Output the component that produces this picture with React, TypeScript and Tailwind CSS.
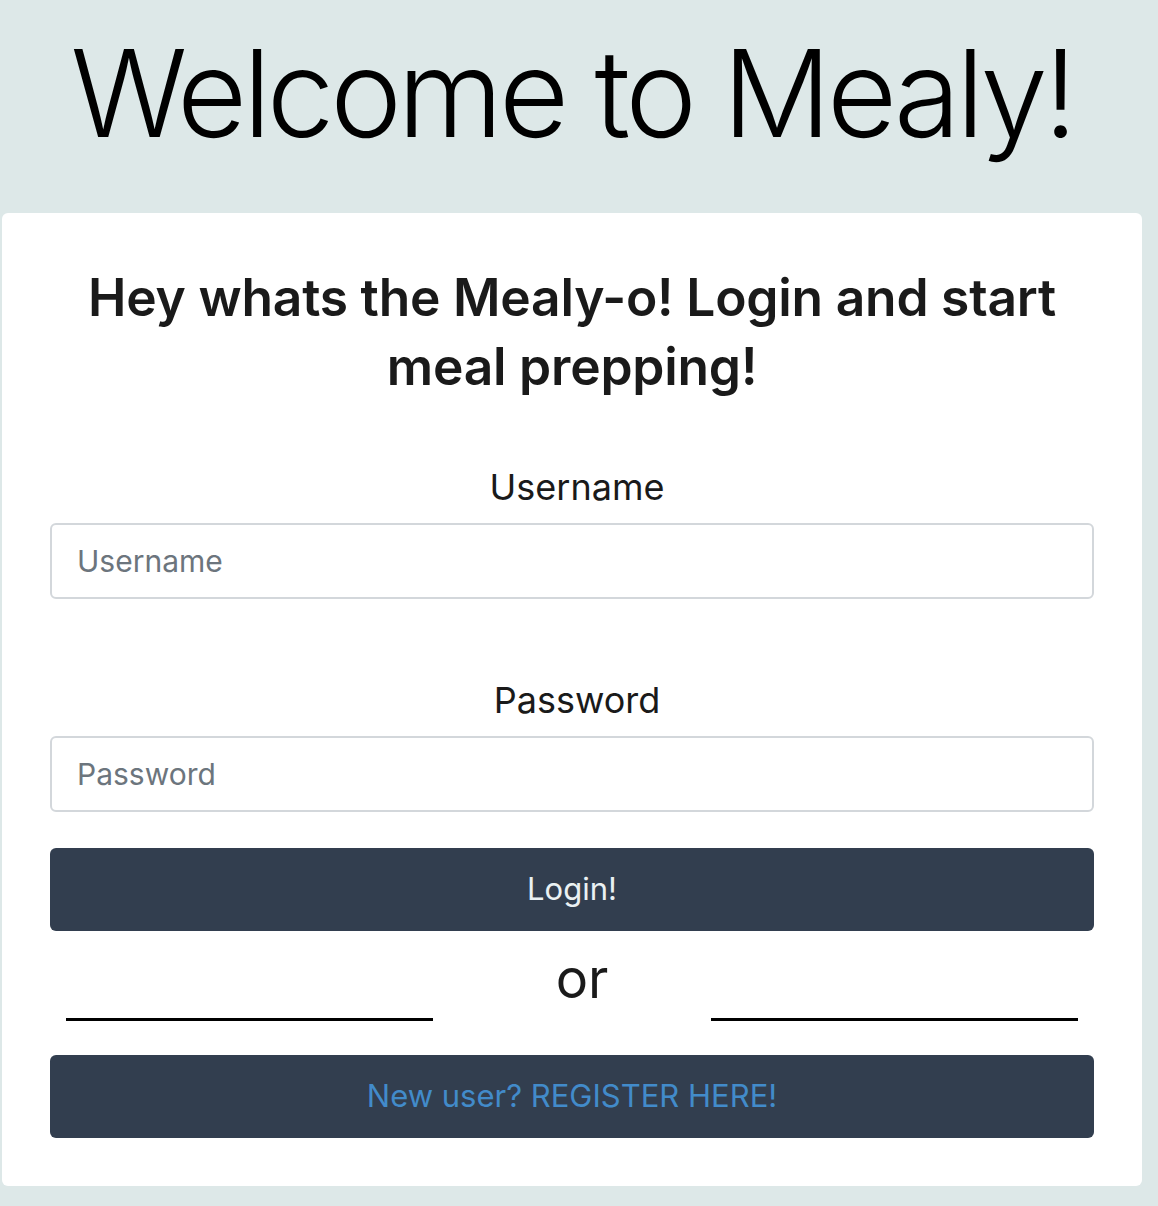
export default function App() {
  return (
    <div className="min-h-[1206px] w-full bg-[#dde8e8] font-['Inter',sans-serif]">
      <div className="w-[1144px]">
        <h1 className="pt-[18px] pb-[45px] text-center text-[121px] font-light leading-[150px] tracking-[-4.3px] text-black">
          Welcome to Mealy!
        </h1>

        <div className="mx-[2px] rounded-md bg-white px-[48px] pt-[50px] pb-[48px]">
          <h2 className="mx-auto max-w-[1000px] text-center text-[51.5px] font-[560] leading-[69px] tracking-[-0.2px] text-[#1a1a1a]">
            Hey whats the Mealy-o! Login and start meal prepping!
          </h2>

          <form className="mt-[66px] flex flex-col" onSubmit={(e) => e.preventDefault()}>
            <label htmlFor="username" className="pl-[10px] text-center text-[36px] leading-[40px] text-[#1a1a1a]">
              Username
            </label>
            <input
              id="username"
              type="text"
              placeholder="Username"
              className="mt-[16px] h-[76px] w-full rounded-md border-2 border-[#d3d7db] px-[25px] text-[30px] text-[#212529] outline-none placeholder:text-[#6c757d]"
            />

            <label htmlFor="password" className="mt-[81px] pl-[10px] text-center text-[36px] leading-[40px] text-[#1a1a1a]">
              Password
            </label>
            <input
              id="password"
              type="password"
              placeholder="Password"
              className="mt-[16px] h-[76px] w-full rounded-md border-2 border-[#d3d7db] px-[25px] text-[30px] text-[#212529] outline-none placeholder:text-[#6c757d]"
            />

            <button
              type="submit"
              className="mt-[36px] h-[83px] w-full rounded-md bg-[#323e4f] text-[31px] text-[#eaf1f3]"
            >
              Login!
            </button>
          </form>

          <div className="flex h-[90px] items-end justify-between px-[16px]">
            <div className="h-[3px] w-[367px] bg-black" />
            <span className="mb-[15px] ml-[20px] text-[54px] leading-[54px] text-[#1a1a1a]">or</span>
            <div className="h-[3px] w-[367px] bg-black" />
          </div>

          <button
            type="button"
            className="mt-[34px] h-[83px] w-full rounded-md bg-[#323e4f] text-[31px] text-[#428bca]"
          >
            New user? REGISTER HERE!
          </button>
        </div>
      </div>
    </div>
  );
}
